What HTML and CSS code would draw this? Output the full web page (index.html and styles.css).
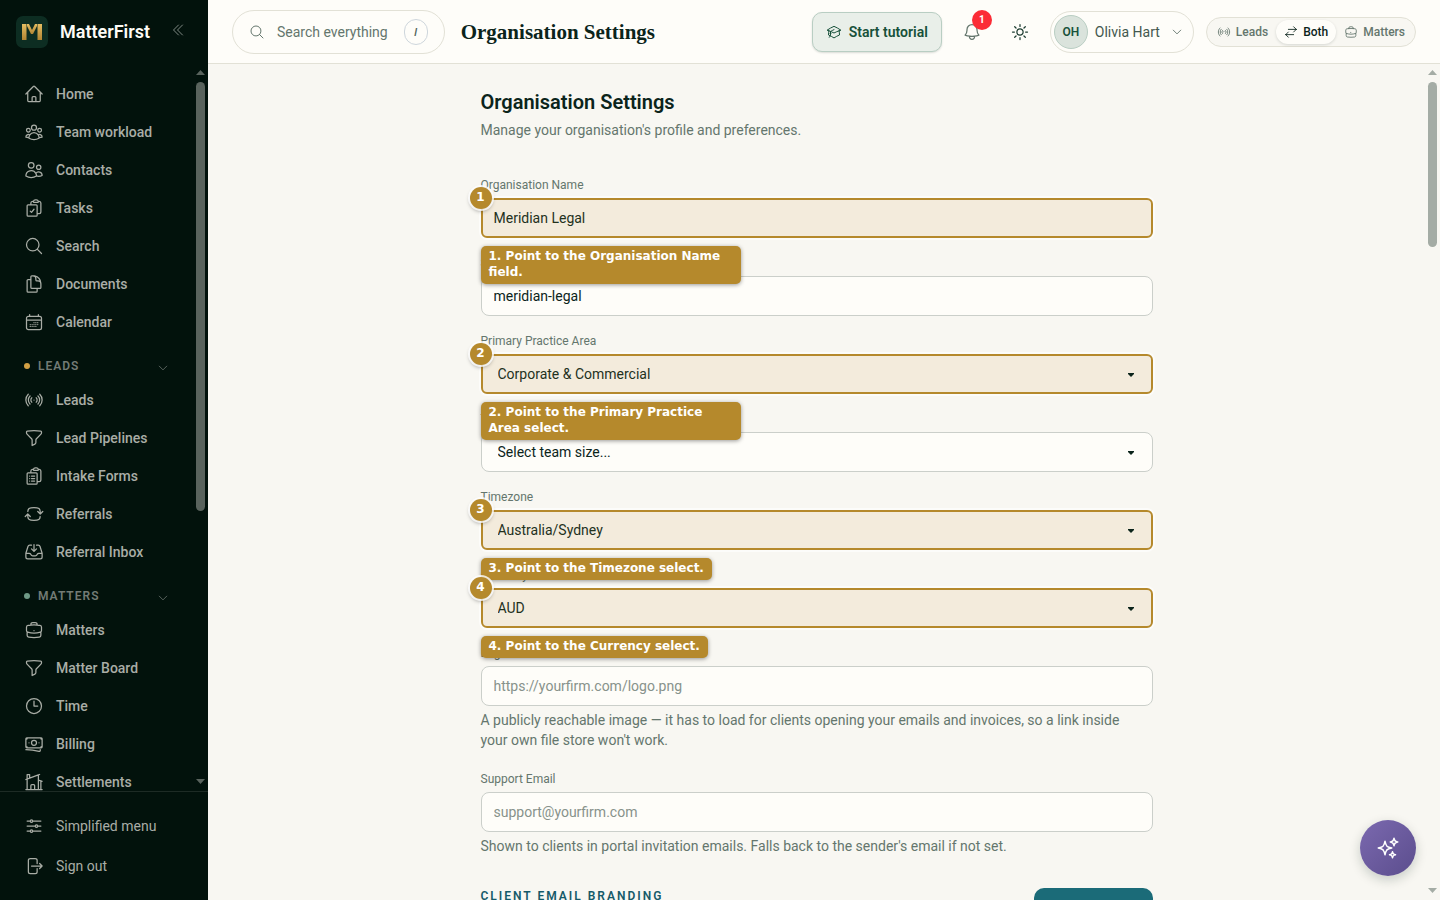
FILE: index.html
```html
<!DOCTYPE html>
<html lang="en">
<head>
    <meta charset="UTF-8">
    <meta name="viewport" content="width=device-width, initial-scale=1.0">
    <title>Organisation Settings - MatterFirst</title>
    <link rel="stylesheet" href="styles.css">
</head>
<body>
    <svg class="sprite" aria-hidden="true">
        <symbol id="home" viewBox="0 0 24 24"><path d="m2.25 12 8.954-8.955c.44-.439 1.152-.439 1.591 0L21.75 12M4.5 9.75v10.125c0 .621.504 1.125 1.125 1.125H9.75v-4.875c0-.621.504-1.125 1.125-1.125h2.25c.621 0 1.125.504 1.125 1.125V21h4.125c.621 0 1.125-.504 1.125-1.125V9.75M8.25 21h8.25"/></symbol>
        <symbol id="team" viewBox="0 0 24 24"><path d="M18 18.72a9.094 9.094 0 0 0 3.741-.479 3 3 0 0 0-4.682-2.72m.94 3.198.001.031c0 .225-.012.447-.037.666A11.944 11.944 0 0 1 12 21c-2.17 0-4.207-.576-5.963-1.584A6.062 6.062 0 0 1 6 18.719m12 0a5.971 5.971 0 0 0-.941-3.197m0 0A5.995 5.995 0 0 0 12 12.75a5.995 5.995 0 0 0-5.058 2.772m0 0a3 3 0 0 0-4.681 2.72 8.986 8.986 0 0 0 3.74.477m.94-3.197a5.971 5.971 0 0 0-.94 3.197M15 6.75a3 3 0 1 1-6 0 3 3 0 0 1 6 0Zm6 3a2.25 2.25 0 1 1-4.5 0 2.25 2.25 0 0 1 4.5 0Zm-13.5 0a2.25 2.25 0 1 1-4.5 0 2.25 2.25 0 0 1 4.5 0Z"/></symbol>
        <symbol id="users" viewBox="0 0 24 24"><path d="M15 19.128a9.38 9.38 0 0 0 2.625.372 9.337 9.337 0 0 0 4.121-.952 4.125 4.125 0 0 0-7.533-2.493M15 19.128v-.003c0-1.113-.285-2.16-.786-3.07M15 19.128v.106A12.318 12.318 0 0 1 8.624 21c-2.331 0-4.512-.645-6.374-1.766l-.001-.109a6.375 6.375 0 0 1 11.964-3.07M12 6.375a3.375 3.375 0 1 1-6.75 0 3.375 3.375 0 0 1 6.75 0Zm8.25 2.25a2.625 2.625 0 1 1-5.25 0 2.625 2.625 0 0 1 5.25 0Z"/></symbol>
        <symbol id="tasks" viewBox="0 0 24 24"><path d="M11.35 3.836c-.065.21-.1.433-.1.664 0 .414.336.75.75.75h4.5a.75.75 0 0 0 .75-.75 2.25 2.25 0 0 0-.1-.664m-5.8 0A2.251 2.251 0 0 1 13.5 2.25H15c1.012 0 1.867.668 2.15 1.586m-5.8 0c-.376.023-.75.05-1.124.08C9.095 4.01 8.25 4.973 8.25 6.108V8.25m8.9-4.414c.376.023.75.05 1.124.08 1.131.094 1.976 1.057 1.976 2.192V16.5A2.25 2.25 0 0 1 18 18.75h-2.25m-7.5-10.5H4.875c-.621 0-1.125.504-1.125 1.125v11.25c0 .621.504 1.125 1.125 1.125h9.75c.621 0 1.125-.504 1.125-1.125V18.75m-7.5-10.5h6.375c.621 0 1.125.504 1.125 1.125v9.375m-8.25-3 1.5 1.5 3-3.75"/></symbol>
        <symbol id="search" viewBox="0 0 24 24"><path d="m21 21-5.197-5.197m0 0A7.5 7.5 0 1 0 5.196 5.196a7.5 7.5 0 0 0 10.607 10.607Z"/></symbol>
        <symbol id="documents" viewBox="0 0 24 24"><path d="M15.75 17.25v3.375c0 .621-.504 1.125-1.125 1.125h-9.75a1.125 1.125 0 0 1-1.125-1.125V7.875c0-.621.504-1.125 1.125-1.125H6.75a9.06 9.06 0 0 1 1.5.124m7.5 10.376h3.375c.621 0 1.125-.504 1.125-1.125V11.25c0-4.46-3.243-8.161-7.5-8.876a9.06 9.06 0 0 0-1.5-.124H9.375c-.621 0-1.125.504-1.125 1.125v3.5m7.5 10.375H9.375a1.125 1.125 0 0 1-1.125-1.125v-9.25m12 6.625v-1.875a3.375 3.375 0 0 0-3.375-3.375h-1.5a1.125 1.125 0 0 1-1.125-1.125v-1.5a3.375 3.375 0 0 0-3.375-3.375H9.75"/></symbol>
        <symbol id="calendar" viewBox="0 0 24 24"><path d="M6.75 3v2.25M17.25 3v2.25M5.25 5.25h13.5A2.25 2.25 0 0 1 21 7.5v11.25A2.25 2.25 0 0 1 18.75 21H5.25A2.25 2.25 0 0 1 3 18.75V7.5a2.25 2.25 0 0 1 2.25-2.25ZM3 9.75h18M12 12.75h.01M14.25 12.75h.01M16.5 12.75h.01M7.5 15h.01M9.75 15h.01M12 15h.01M14.25 15h.01M16.5 15h.01M7.5 17.25h.01M9.75 17.25h.01M12 17.25h.01M14.25 17.25h.01"/></symbol>
        <symbol id="signal" viewBox="0 0 24 24"><path d="M9.348 14.652a3.75 3.75 0 0 1 0-5.304m5.304 0a3.75 3.75 0 0 1 0 5.304m-7.425 2.121a6.75 6.75 0 0 1 0-9.546m9.546 0a6.75 6.75 0 0 1 0 9.546M5.106 18.894c-3.808-3.807-3.808-9.98 0-13.788m13.788 0c3.808 3.807 3.808 9.98 0 13.788M12 12h.008v.008H12V12Z"/></symbol>
        <symbol id="funnel" viewBox="0 0 24 24"><path d="M12 3c2.755 0 5.455.232 8.083.678.533.09.917.556.917 1.096v1.044a2.25 2.25 0 0 1-.659 1.591l-5.432 5.432a2.25 2.25 0 0 0-.659 1.591v2.927a2.25 2.25 0 0 1-1.244 2.013L9.75 21v-6.568a2.25 2.25 0 0 0-.659-1.591L3.659 7.409A2.25 2.25 0 0 1 3 5.818V4.774c0-.54.384-1.006.917-1.096A48.32 48.32 0 0 1 12 3Z"/></symbol>
        <symbol id="forms" viewBox="0 0 24 24"><path d="M9 12h3.75M9 15h3.75M9 18h3.75m3 .75H18a2.25 2.25 0 0 0 2.25-2.25V6.108c0-1.135-.845-2.098-1.976-2.192a48.424 48.424 0 0 0-1.123-.08m-5.801 0c-.065.21-.1.433-.1.664 0 .414.336.75.75.75h4.5a.75.75 0 0 0 .75-.75 2.25 2.25 0 0 0-.1-.664m-5.8 0A2.251 2.251 0 0 1 13.5 2.25H15c1.012 0 1.867.668 2.15 1.586m-5.8 0c-.376.023-.75.05-1.124.08C9.095 4.01 8.25 4.973 8.25 6.108V8.25m0 0H4.875c-.621 0-1.125.504-1.125 1.125v11.25c0 .621.504 1.125 1.125 1.125h9.75c.621 0 1.125-.504 1.125-1.125V9.375c0-.621-.504-1.125-1.125-1.125H8.25ZM6.75 12h.008v.008H6.75V12Zm0 3h.008v.008H6.75V15Zm0 3h.008v.008H6.75V18Z"/></symbol>
        <symbol id="referrals" viewBox="0 0 24 24"><path d="M19.5 12c0-1.232-.046-2.453-.138-3.662a4.006 4.006 0 0 0-3.7-3.7 48.678 48.678 0 0 0-7.324 0 4.006 4.006 0 0 0-3.7 3.7c-.017.22-.032.441-.046.662M19.5 12l3-3m-3 3-3-3m-12 3c0 1.232.046 2.453.138 3.662a4.006 4.006 0 0 0 3.7 3.7 48.656 48.656 0 0 0 7.324 0 4.006 4.006 0 0 0 3.7-3.7c.017-.22.032-.441.046-.662M4.5 12l3 3m-3-3-3 3"/></symbol>
        <symbol id="inbox" viewBox="0 0 24 24"><path d="M9 3.75H6.912a2.25 2.25 0 0 0-2.15 1.588L2.35 13.177a2.25 2.25 0 0 0-.1.661V18a2.25 2.25 0 0 0 2.25 2.25h15A2.25 2.25 0 0 0 21.75 18v-4.162c0-.224-.034-.447-.1-.661L19.24 5.338a2.25 2.25 0 0 0-2.15-1.588H15M2.25 13.5h3.86a2.25 2.25 0 0 1 2.012 1.244l.256.512a2.25 2.25 0 0 0 2.013 1.244h3.218a2.25 2.25 0 0 0 2.013-1.244l.256-.512a2.25 2.25 0 0 1 2.013-1.244h3.859M12 3v8.25m0 0-3-3m3 3 3-3"/></symbol>
        <symbol id="briefcase" viewBox="0 0 24 24"><path d="M20.25 14.15v4.25c0 1.094-.787 2.036-1.872 2.18-2.087.277-4.216.42-6.378.42s-4.291-.143-6.378-.42c-1.085-.144-1.872-1.086-1.872-2.18v-4.25m16.5 0a2.18 2.18 0 0 0 .75-1.661V8.706c0-1.081-.768-2.015-1.837-2.175a48.114 48.114 0 0 0-3.413-.387m4.5 8.006c-.194.165-.42.295-.673.38A23.978 23.978 0 0 1 12 15.75c-2.648 0-5.195-.429-7.577-1.22a2.016 2.016 0 0 1-.673-.38m0 0A2.18 2.18 0 0 1 3 12.489V8.706c0-1.081.768-2.015 1.837-2.175a48.111 48.111 0 0 1 3.413-.387m7.5 0V5.25A2.25 2.25 0 0 0 13.5 3h-3a2.25 2.25 0 0 0-2.25 2.25v.894m7.5 0a48.667 48.667 0 0 0-7.5 0M12 12.75h.008v.008H12v-.008Z"/></symbol>
        <symbol id="clock" viewBox="0 0 24 24"><path d="M12 6v6h4.5m4.5 0a9 9 0 1 1-18 0 9 9 0 0 1 18 0Z"/></symbol>
        <symbol id="banknotes" viewBox="0 0 24 24"><path d="M2.25 18.75a60.07 60.07 0 0 1 15.797 2.101c.727.198 1.453-.342 1.453-1.096V18.75M3.75 4.5v.75A.75.75 0 0 1 3 6h-.75m0 0v-.375c0-.621.504-1.125 1.125-1.125H20.25M2.25 6v9m18-10.5v.75c0 .414.336.75.75.75h.75m-1.5-1.5h.375c.621 0 1.125.504 1.125 1.125v9.75c0 .621-.504 1.125-1.125 1.125h-.375m1.5-1.5H21a.75.75 0 0 0-.75.75v.75m0 0H3.75m0 0h-.375a1.125 1.125 0 0 1-1.125-1.125V15m1.5 1.5v-.75A.75.75 0 0 0 3 15h-.75M15 10.5a3 3 0 1 1-6 0 3 3 0 0 1 6 0Zm3 0h.008v.008H18V10.5Zm-12 0h.008v.008H6V10.5Z"/></symbol>
        <symbol id="property" viewBox="0 0 24 24"><path d="M8.25 21v-4.875c0-.621.504-1.125 1.125-1.125h2.25c.621 0 1.125.504 1.125 1.125V21m0 0h4.5V3.545M12.75 21h7.5V10.75M2.25 21h1.5m18 0h-18M2.25 9l4.5-1.636M18.75 3l-1.5.545m0 6.205 3 1m1.5.5-1.5-.5M6.75 7.364V3h-3v18m3-13.636 10.5-3.819"/></symbol>
        <symbol id="sliders" viewBox="0 0 24 24"><path d="M10.5 6h9.75M10.5 6a1.5 1.5 0 1 1-3 0m3 0a1.5 1.5 0 1 0-3 0M3.75 6H7.5m3 12h9.75m-9.75 0a1.5 1.5 0 0 1-3 0m3 0a1.5 1.5 0 0 0-3 0m-3.75 0H7.5m9-6h3.75m-3.75 0a1.5 1.5 0 0 1-3 0m3 0a1.5 1.5 0 0 0-3 0m-9.75 0h9.75"/></symbol>
        <symbol id="sign-out" viewBox="0 0 24 24"><path d="M15.75 9V5.25A2.25 2.25 0 0 0 13.5 3h-6a2.25 2.25 0 0 0-2.25 2.25v13.5A2.25 2.25 0 0 0 7.5 21h6a2.25 2.25 0 0 0 2.25-2.25V15m3 0 3-3m0 0-3-3m3 3H9"/></symbol>
        <symbol id="collapse" viewBox="0 0 24 24"><path d="m18.75 4.5-7.5 7.5 7.5 7.5m-6-15L5.25 12l7.5 7.5"/></symbol>
        <symbol id="chevron" viewBox="0 0 24 24"><path d="m19.5 8.25-7.5 7.5-7.5-7.5"/></symbol>
        <symbol id="bell" viewBox="0 0 24 24"><path d="M14.857 17.082a23.848 23.848 0 0 0 5.454-1.31A8.967 8.967 0 0 1 18 9.75V9A6 6 0 0 0 6 9v.75a8.967 8.967 0 0 1-2.312 6.022c1.733.64 3.56 1.085 5.455 1.31m5.714 0a24.255 24.255 0 0 1-5.714 0m5.714 0a3 3 0 1 1-5.714 0"/></symbol>
        <symbol id="sun" viewBox="0 0 24 24"><path d="M12 3v2.25m6.364.386-1.591 1.591M21 12h-2.25m-.386 6.364-1.591-1.591M12 18.75V21m-4.773-4.227-1.591 1.591M5.25 12H3m4.227-4.773L5.636 5.636M15.75 12a3.75 3.75 0 1 1-7.5 0 3.75 3.75 0 0 1 7.5 0Z"/></symbol>
        <symbol id="cap" viewBox="0 0 24 24"><path d="M4.26 10.147a60.438 60.438 0 0 0-.491 6.347A48.62 48.62 0 0 1 12 20.904a48.62 48.62 0 0 1 8.232-4.41 60.46 60.46 0 0 0-.491-6.347m-15.482 0a50.636 50.636 0 0 0-2.658-.813A59.906 59.906 0 0 1 12 3.493a59.903 59.903 0 0 1 10.399 5.84c-.896.248-1.783.52-2.658.814m-15.482 0A50.717 50.717 0 0 1 12 13.489a50.702 50.702 0 0 1 7.74-3.342M6.75 15a.75.75 0 1 0 0-1.5.75.75 0 0 0 0 1.5Zm0 0v-3.675A55.378 55.378 0 0 1 12 8.443m-7.007 11.55A5.981 5.981 0 0 0 6.75 15.75v-1.5"/></symbol>
        <symbol id="swap" viewBox="0 0 24 24"><path d="M7.5 21 3 16.5m0 0L7.5 12M3 16.5h13.5m0-13.5L21 7.5m0 0L16.5 12M21 7.5H7.5"/></symbol>
        <symbol id="sparkles" viewBox="0 0 24 24"><path d="M9.813 15.904 9 18.75l-.813-2.846a4.5 4.5 0 0 0-3.09-3.09L2.25 12l2.846-.813a4.5 4.5 0 0 0 3.09-3.09L9 5.25l.813 2.846a4.5 4.5 0 0 0 3.09 3.09L15.75 12l-2.846.813a4.5 4.5 0 0 0-3.09 3.09ZM18.259 8.715 18 9.75l-.259-1.035a3.375 3.375 0 0 0-2.455-2.456L14.25 6l1.036-.259a3.375 3.375 0 0 0 2.455-2.456L18 2.25l.259 1.035a3.375 3.375 0 0 0 2.456 2.456L21.75 6l-1.035.259a3.375 3.375 0 0 0-2.456 2.456ZM16.894 20.567 16.5 21.75l-.394-1.183a2.25 2.25 0 0 0-1.423-1.423L13.5 18.75l1.183-.394a2.25 2.25 0 0 0 1.423-1.423l.394-1.183.394 1.183a2.25 2.25 0 0 0 1.423 1.423l1.183.394-1.183.394a2.25 2.25 0 0 0-1.423 1.423Z"/></symbol>
    </svg>

    <div class="app">
        <aside class="sidebar">
            <div class="brand">
                <svg class="brand-mark" viewBox="0 0 32 32" aria-hidden="true">
                    <defs>
                        <linearGradient id="gold" x1="0" y1="0" x2="0" y2="1">
                            <stop offset="0" stop-color="#e5bd62"/>
                            <stop offset="1" stop-color="#b18432"/>
                        </linearGradient>
                    </defs>
                    <rect width="32" height="32" rx="7" fill="#0d2d22"/>
                    <rect x="6" y="8" width="4.5" height="16" fill="url(#gold)"/>
                    <rect x="21.5" y="8" width="4.500" height="16" fill="url(#gold)"/>
                    <path d="M11 8h2l3 6 3-6h2v2l-4 8h-2l-4-8Z" fill="url(#gold)"/>
                </svg>
                <span class="brand-name">MatterFirst</span>
                <button class="collapse" aria-label="Collapse menu"><svg class="icon icon-sm"><use href="#collapse"/></svg></button>
            </div>
            <div class="scroll-area">
                <nav class="nav">
                    <a class="nav-item" href="#"><svg class="icon"><use href="#home"/></svg>Home</a>
                    <a class="nav-item" href="#"><svg class="icon"><use href="#team"/></svg>Team workload</a>
                    <a class="nav-item" href="#"><svg class="icon"><use href="#users"/></svg>Contacts</a>
                    <a class="nav-item" href="#"><svg class="icon"><use href="#tasks"/></svg>Tasks</a>
                    <a class="nav-item" href="#"><svg class="icon"><use href="#search"/></svg>Search</a>
                    <a class="nav-item" href="#"><svg class="icon"><use href="#documents"/></svg>Documents</a>
                    <a class="nav-item" href="#"><svg class="icon"><use href="#calendar"/></svg>Calendar</a>
                    <button class="nav-group leads"><span class="dot"></span>LEADS<svg class="icon icon-xs"><use href="#chevron"/></svg></button>
                    <a class="nav-item" href="#"><svg class="icon"><use href="#signal"/></svg>Leads</a>
                    <a class="nav-item" href="#"><svg class="icon"><use href="#funnel"/></svg>Lead Pipelines</a>
                    <a class="nav-item" href="#"><svg class="icon"><use href="#forms"/></svg>Intake Forms</a>
                    <a class="nav-item" href="#"><svg class="icon"><use href="#referrals"/></svg>Referrals</a>
                    <a class="nav-item" href="#"><svg class="icon"><use href="#inbox"/></svg>Referral Inbox</a>
                    <button class="nav-group"><span class="dot"></span>MATTERS<svg class="icon icon-xs"><use href="#chevron"/></svg></button>
                    <a class="nav-item" href="#"><svg class="icon"><use href="#briefcase"/></svg>Matters</a>
                    <a class="nav-item" href="#"><svg class="icon"><use href="#funnel"/></svg>Matter Board</a>
                    <a class="nav-item" href="#"><svg class="icon"><use href="#clock"/></svg>Time</a>
                    <a class="nav-item" href="#"><svg class="icon"><use href="#banknotes"/></svg>Billing</a>
                    <a class="nav-item" href="#"><svg class="icon"><use href="#property"/></svg>Settlements</a>
                </nav>
                <div class="scrollbar" aria-hidden="true"><div class="thumb"></div></div>
            </div>
            <div class="sidebar-footer">
                <button class="footer-item"><svg class="icon"><use href="#sliders"/></svg>Simplified menu</button>
                <button class="footer-item"><svg class="icon"><use href="#sign-out"/></svg>Sign out</button>
            </div>
        </aside>

        <div class="page">
            <header class="topbar">
                <button class="search"><svg class="icon icon-sm"><use href="#search"/></svg>Search everything<kbd>/</kbd></button>
                <div class="topbar-title">Organisation Settings</div>
                <div class="topbar-actions">
                    <button class="tutorial"><svg class="icon icon-sm"><use href="#cap"/></svg>Start tutorial</button>
                    <button class="icon-button" aria-label="Notifications"><svg class="icon"><use href="#bell"/></svg><span class="count">1</span></button>
                    <button class="icon-button dark" aria-label="Switch theme"><svg class="icon"><use href="#sun"/></svg></button>
                    <button class="user"><span class="avatar">OH</span>Olivia Hart<svg class="icon icon-xs"><use href="#chevron"/></svg></button>
                    <div class="segmented">
                        <button><svg class="icon icon-seg"><use href="#signal"/></svg>Leads</button>
                        <button class="active"><svg class="icon icon-seg"><use href="#swap"/></svg>Both</button>
                        <button><svg class="icon icon-seg"><use href="#briefcase"/></svg>Matters</button>
                    </div>
                </div>
            </header>

            <div class="scroll-area">
                <main class="content">
                    <form class="settings">
                        <h1>Organisation Settings</h1>
                        <p class="intro">Manage your organisation's profile and preferences.</p>

                        <div class="field">
                            <label for="name">Organisation Name</label>
                            <div class="control marked">
                                <input type="text" id="name" value="Meridian Legal">
                                <span class="step">1</span>
                                <div class="tip">1. Point to the Organisation Name field.</div>
                            </div>
                        </div>
                        <div class="field">
                            <label for="slug">Slug</label>
                            <div class="control"><input type="text" id="slug" value="meridian-legal"></div>
                        </div>
                        <div class="field">
                            <label for="area">Primary Practice Area</label>
                            <div class="control marked">
                                <select id="area"><option>Corporate &amp; Commercial</option></select>
                                <span class="step">2</span>
                                <div class="tip">2. Point to the Primary Practice Area select.</div>
                            </div>
                        </div>
                        <div class="field">
                            <label for="size">Team Size</label>
                            <div class="control"><select id="size"><option>Select team size...</option></select></div>
                        </div>
                        <div class="field">
                            <label for="timezone">Timezone</label>
                            <div class="control marked">
                                <select id="timezone"><option>Australia/Sydney</option></select>
                                <span class="step">3</span>
                                <div class="tip">3. Point to the Timezone select.</div>
                            </div>
                        </div>
                        <div class="field">
                            <label for="currency">Currency</label>
                            <div class="control marked">
                                <select id="currency"><option>AUD</option></select>
                                <span class="step">4</span>
                                <div class="tip">4. Point to the Currency select.</div>
                            </div>
                        </div>
                        <div class="field">
                            <label for="logo">Logo URL</label>
                            <div class="control"><input type="url" id="logo" placeholder="https://yourfirm.com/logo.png"></div>
                            <p class="help">A publicly reachable image — it has to load for clients opening your emails and invoices, so a link inside your own file store won't work.</p>
                        </div>
                        <div class="field">
                            <label for="support">Support Email</label>
                            <div class="control"><input type="email" id="support" placeholder="support@yourfirm.com"></div>
                            <p class="help">Shown to clients in portal invitation emails. Falls back to the sender's email if not set.</p>
                        </div>

                        <div class="section-head">
                            <h2>CLIENT EMAIL BRANDING</h2>
                            <button type="button" class="primary" aria-label="Save branding"></button>
                        </div>
                    </form>
                </main>
                <div class="scrollbar" aria-hidden="true"><div class="thumb"></div></div>
            </div>
        </div>
    </div>
    <button class="assistant" aria-label="Open assistant"><svg class="icon icon-lg"><use href="#sparkles"/></svg></button>
</body>
</html>
```
FILE: styles.css
```css
* { box-sizing: border-box; }
body { margin: 0; font-family: Roboto, "Liberation Sans", sans-serif; font-size: 14px; line-height: 20px; color: #0b241b; background: #f8f7f2; }
button, input, select { font: inherit; color: inherit; }
button { display: flex; align-items: center; padding: 0; border: 0; background: none; }
.sprite { position: absolute; width: 0; height: 0; }
.icon { width: 20px; height: 20px; flex: none; fill: none; stroke: currentColor; stroke-width: 1.5; stroke-linecap: round; stroke-linejoin: round; }
.icon-sm { width: 16px; height: 16px; }
.icon-seg { width: 14px; height: 14px; }
.icon-xs { width: 12px; height: 12px; }
.icon-lg { width: 24px; height: 24px; }

.app { display: flex; height: 100vh; }

/* Scroll panes: the native bar is replaced by .scrollbar */
.scroll-area { display: flex; flex: 1; min-height: 0; }
.nav, .content { flex: 1; min-width: 0; overflow-y: auto; scrollbar-width: none; }
.scrollbar { display: flex; flex-direction: column; align-items: center; width: 15px; flex: none; color: #a4aca5; }
.scrollbar::before, .scrollbar::after { content: ""; height: 18px; flex: none; width: 9px; background: currentColor; }
.scrollbar::before { clip-path: polygon(0 11px, 50% 6px, 100% 11px); }
.scrollbar::after { margin-top: auto; clip-path: polygon(0 6px, 50% 11px, 100% 6px); }
.thumb { width: 9px; height: 18%; border-radius: 5px; background: currentColor; }
.content + .scrollbar .thumb { height: 165px; }
.nav + .scrollbar { color: #59635d; }
.nav + .scrollbar .thumb { height: 59%; }

/* Sidebar */
.sidebar { display: flex; flex-direction: column; width: 208px; flex: none; background: #02120c; color: #a9ada6; }
.brand { display: flex; align-items: center; gap: 12px; height: 64px; padding: 0 16px; flex: none; }
.brand-mark { width: 32px; height: 32px; }
.brand-name { flex: 1; font-size: 18px; font-weight: 600; color: #fdfcf7; }
.collapse { padding: 0 6px 4px 0; color: #7f8983; }
.nav { padding-top: 11px; }
.nav-item { display: flex; align-items: center; gap: 12px; height: 38px; padding: 0 24px; font-weight: 500; color: inherit; text-decoration: none; white-space: nowrap; }
.nav-group { width: 100%; height: 40px; gap: 8px; padding: 10px 24px 0; font-size: 12px; font-weight: 600; letter-spacing: 1px; color: #737b75; }
.nav-group .icon { margin: 4px 0 0 auto; }
.dot { width: 6px; height: 6px; border-radius: 50%; background: #6f9a87; }
.leads .dot { background: #d2a044; }
.sidebar-footer { flex: none; padding: 14px 0; border-top: 1px solid #1d2b25; }
.footer-item { width: 100%; height: 40px; gap: 12px; padding: 0 24px; }

/* Top bar */
.page { display: flex; flex-direction: column; flex: 1; min-width: 0; }
.topbar { display: flex; align-items: center; gap: 16px; height: 64px; flex: none; padding: 0 24px; background: #fefdf9; border-bottom: 1px solid #e2e1d6; }
.search { gap: 12px; height: 44px; padding: 0 16px; border: 1px solid #e2e1d6; border-radius: 22px; color: #64766d; }
.search kbd { width: 24px; height: 26px; margin-left: 4px; border: 1px solid #ced6dc; border-radius: 12px; font: bold 11px/24px "Liberation Sans", sans-serif; text-align: center; color: #50635a; }
.topbar-title { font: bold 21px/24px "Liberation Serif", serif; }
.topbar-actions { display: flex; align-items: center; margin-left: auto; }
.tutorial { gap: 7px; height: 40px; padding: 0 13px; border: 1px solid #b9cec3; border-radius: 10px; background: #e9efe9; box-shadow: 0 1px 2px #0b241b26; font-weight: 600; color: #17513a; }
.icon-button { position: relative; justify-content: center; width: 40px; height: 40px; color: #64766d; }
.icon-button + .icon-button { margin-left: 8px; }
.tutorial + .icon-button { margin-left: 10px; }
.icon-button.dark { color: #1c3c30; }
.count { position: absolute; top: -2px; right: 0; width: 20px; height: 20px; border-radius: 50%; background: #fb2c36; font-size: 10px; font-weight: 700; text-align: center; color: #fff; }
.user { gap: 7px; height: 42px; margin: 0 12px 0 10px; padding: 0 10px 0 3px; border: 1px solid #e2e1d6; border-radius: 21px; color: #43584f; }
.user .icon { margin-left: 4px; }
.avatar { width: 34px; height: 34px; border: 1px solid #b9cec3; border-radius: 50%; background: #dae3dc; font-size: 12px; font-weight: 600; line-height: 32px; text-align: center; color: #17513a; }
.segmented { display: flex; height: 30px; padding: 2px; border: 1px solid #e2e1d6; border-radius: 15px; background: #f8f7f2; }
.segmented button { gap: 5px; padding: 0 8px; border-radius: 12px; font-size: 12px; font-weight: 500; color: #64766d; }
.segmented .active { background: #fefdf9; box-shadow: 0 1px 3px #0b241b26; color: #0b241b; }

/* Settings form */
.content { padding: 24px; }
.settings { max-width: 672px; margin: 0 auto; }
h1 { margin: 0; font-size: 20px; line-height: 28px; font-weight: 600; }
.intro { margin: 4px 0 36px; color: #64766d; }
.field { margin-bottom: 16px; }
.field label { display: block; margin-bottom: 4px; font-size: 12px; line-height: 18px; color: #64766d; }
.control { position: relative; }
.control input, .control select { display: block; width: 100%; height: 40px; padding: 0 12px; border: 1px solid #cbcfca; border-radius: 8px; outline: 0; background: #fefdf9; }
.control select { appearance: none; padding: 0 16px; background: #fefdf9 url("data:image/svg+xml,%3Csvg xmlns='http://www.w3.org/2000/svg' width='6' height='5'%3E%3Cpath d='M0 1h6v1L3 5 0 2Z' fill='%230b241b'/%3E%3C/svg%3E") no-repeat right 18px center; }
.control input::placeholder { color: #87928b; opacity: 1; }
.control.marked input, .control.marked select { padding-left: 11px; border: 2px solid #b5892c; border-radius: 6px; background-color: #f3ebdc; box-shadow: 0 0 0 2px #fff9; color: #23311d; }
.control.marked select { padding-left: 15px; background-position: right 17px center; }
.help { margin: 4px 0 0; padding: 0 24px 4px 0; color: #64766d; }

/* Walkthrough markers */
.step { position: absolute; top: -11px; left: -11px; z-index: 2; width: 22px; height: 22px; border-radius: 50%; background: #b5892c; box-shadow: 0 0 0 2px #fffc, 0 2px 4px #0006; font: bold 12px/20px "DejaVu Sans", sans-serif; text-align: center; color: #fff; }
.tip { position: absolute; top: 48px; left: 0; z-index: 1; max-width: 260px; padding: 2px 8px 4px; border-radius: 5px; background: #b5892c; box-shadow: 0 1px 4px #0006; font: bold 12px/16px "DejaVu Sans", sans-serif; color: #fff; }

.section-head { display: flex; justify-content: space-between; margin-top: 28px; }
.section-head h2 { margin: 0; font-size: 12px; line-height: 16px; font-weight: 600; letter-spacing: 2px; color: #155a69; }
.primary { width: 119px; height: 40px; border-radius: 10px; background: #1b6b78; }

.assistant { position: fixed; right: 24px; bottom: 24px; justify-content: center; width: 56px; height: 56px; border-radius: 50%; background: linear-gradient(135deg, #7b69af, #5b4d8d); box-shadow: 0 4px 12px #0b241b33; color: #fff; }
```
